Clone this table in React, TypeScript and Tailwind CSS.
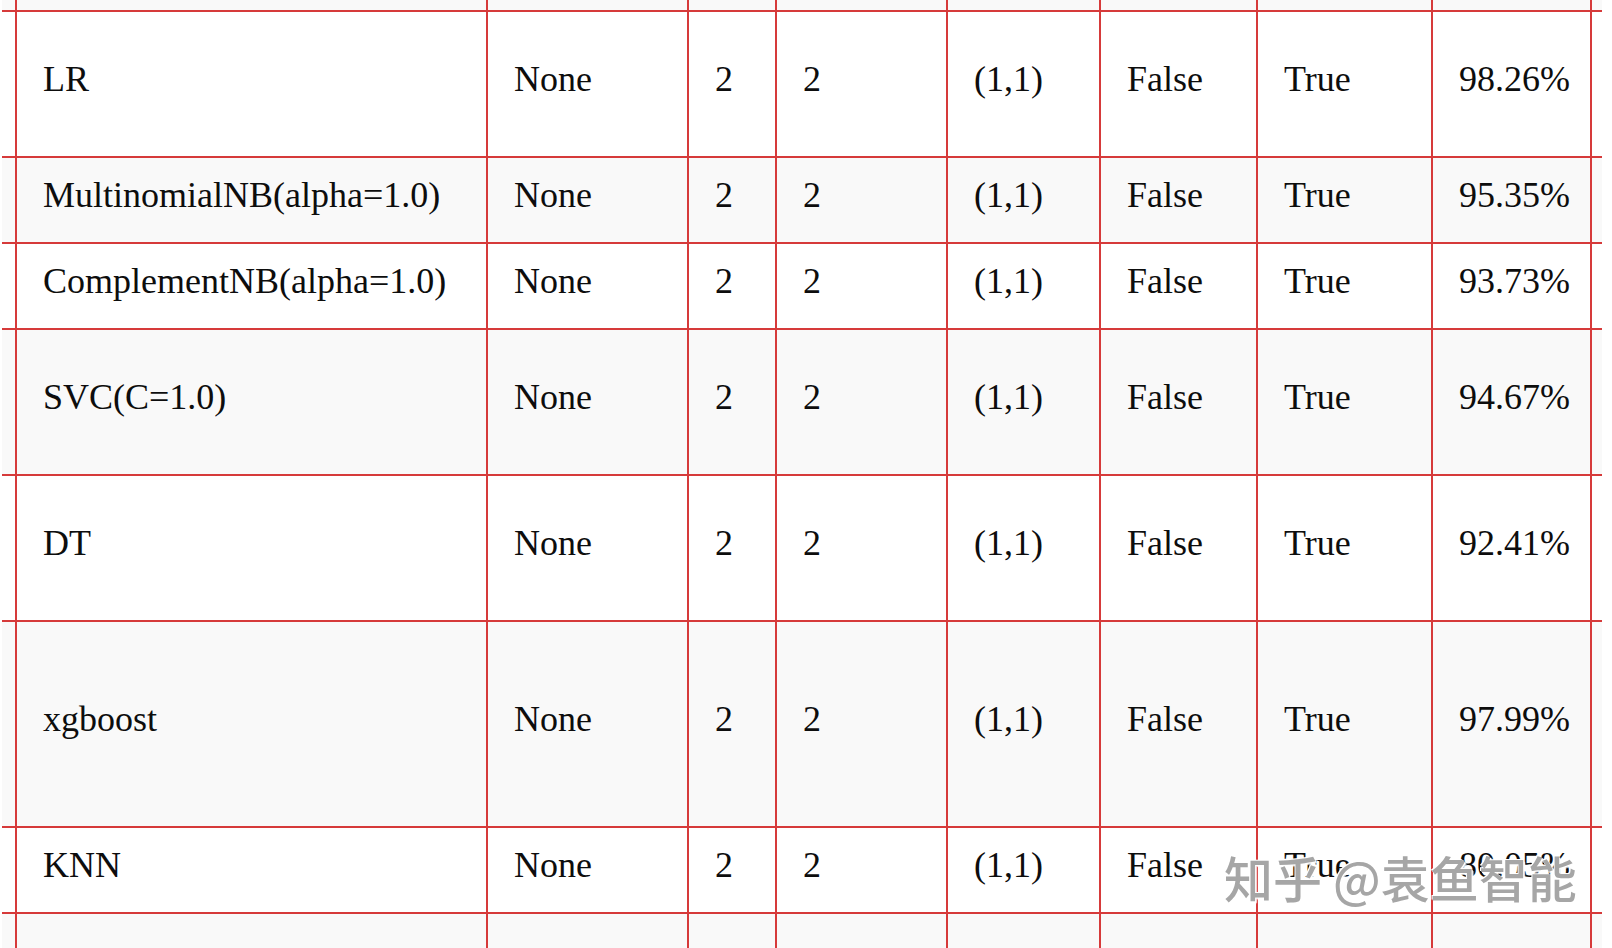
import React from 'react';

type Row = {
  h: string;
  bg: string;
  cells: string[];
};

const widths = [
  'w-[15px]',
  'w-[471px]',
  'w-[201px]',
  'w-[88px]',
  'w-[171px]',
  'w-[153px]',
  'w-[157px]',
  'w-[175px]',
  'w-[159px]',
  'w-[10px]',
];

const stripe = 'bg-[#f9f9f9]';
const plain = 'bg-white';

const rows: Row[] = [
  { h: 'h-[12px]', bg: stripe, cells: [] },
  { h: 'h-[146px]', bg: plain, cells: ['LR', 'None', '2', '2', '(1,1)', 'False', 'True', '98.26%'] },
  { h: 'h-[86px]', bg: stripe, cells: ['MultinomialNB(alpha=1.0)', 'None', '2', '2', '(1,1)', 'False', 'True', '95.35%'] },
  { h: 'h-[86px]', bg: plain, cells: ['ComplementNB(alpha=1.0)', 'None', '2', '2', '(1,1)', 'False', 'True', '93.73%'] },
  { h: 'h-[146px]', bg: stripe, cells: ['SVC(C=1.0)', 'None', '2', '2', '(1,1)', 'False', 'True', '94.67%'] },
  { h: 'h-[146px]', bg: plain, cells: ['DT', 'None', '2', '2', '(1,1)', 'False', 'True', '92.41%'] },
  { h: 'h-[206px]', bg: stripe, cells: ['xgboost', 'None', '2', '2', '(1,1)', 'False', 'True', '97.99%'] },
  { h: 'h-[86px]', bg: plain, cells: ['KNN', 'None', '2', '2', '(1,1)', 'False', 'True', '80.05%'] },
  { h: 'h-[60px]', bg: stripe, cells: [] },
];

export default function App() {
  return (
    <div className="relative w-[1612px] h-[948px] overflow-hidden bg-white text-[#0d0d0d]">
      <div className="ml-[2px] w-[1600px] flex flex-col font-['Liberation_Serif','Times_New_Roman',serif] text-[36px]">
        {rows.map((row, ri) => (
          <div key={ri} className={`flex shrink-0 border-b-2 border-[#d63a3a] ${row.h} ${row.bg}`}>
            {widths.map((w, ci) => {
              const inner = ci >= 1 && ci <= 8;
              const text = inner ? row.cells[ci - 1] : undefined;
              const last = ci === widths.length - 1;
              return (
                <div
                  key={ci}
                  className={`${w} shrink-0 flex items-center whitespace-nowrap ${inner ? 'pl-[26px] pb-[11px]' : ''} ${last ? '' : 'border-r-2 border-[#d63a3a]'}`}
                >
                  {text}
                </div>
              );
            })}
          </div>
        ))}
      </div>

      {/* 水印 */}
      <div className="absolute left-[1224px] top-[852px] whitespace-nowrap font-['Noto_Sans_CJK_SC','Noto_Sans',sans-serif] font-medium text-[49px] leading-none text-[#9c9c9c]/90 [text-shadow:1px_1px_0_#fff,-1px_-1px_0_#fff,2px_2px_1px_rgba(255,255,255,0.8)]">
        知乎 @袁鱼智能
      </div>
    </div>
  );
}
